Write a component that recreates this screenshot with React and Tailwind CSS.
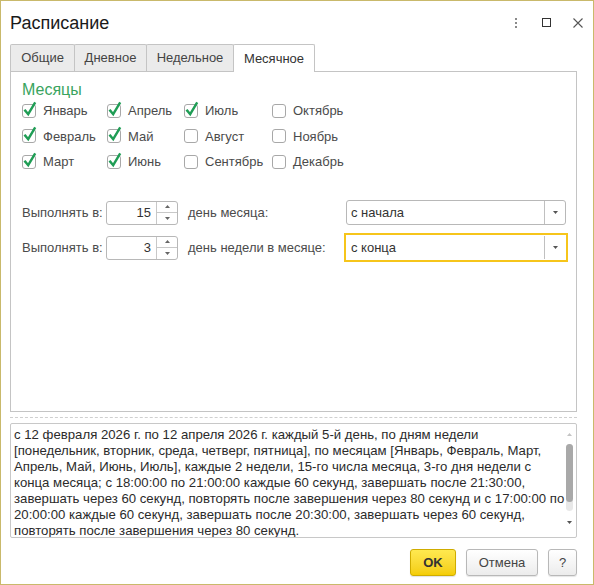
import React from "react";

const MONTHS = [
  [
    { name: "Январь", on: true },
    { name: "Апрель", on: true },
    { name: "Июль", on: true },
    { name: "Октябрь", on: false },
  ],
  [
    { name: "Февраль", on: true },
    { name: "Май", on: true },
    { name: "Август", on: false },
    { name: "Ноябрь", on: false },
  ],
  [
    { name: "Март", on: true },
    { name: "Июнь", on: true },
    { name: "Сентябрь", on: false },
    { name: "Декабрь", on: false },
  ],
];

const COL_WIDTHS = ["w-[85px]", "w-[77px]", "w-[88px]", "w-[90px]"];

const TABS = [
  { name: "Общие", w: "w-[65px]" },
  { name: "Дневное", w: "w-[73px]" },
  { name: "Недельное", w: "w-[88px]" },
  { name: "Месячное", w: "w-[82px]", active: true },
];

// description lines, broken as in the form
const DESCRIPTION = [
  "с 12 февраля 2026 г. по 12 апреля 2026 г. каждый 5-й день, по дням недели",
  "[понедельник, вторник, среда, четверг, пятница], по месяцам [Январь, Февраль, Март,",
  "Апрель, Май, Июнь, Июль], каждые 2 недели, 15-го числа месяца, 3-го дня недели с",
  "конца месяца; с 18:00:00 по 21:00:00 каждые 60 секунд, завершать после 21:30:00,",
  "завершать через 60 секунд, повторять после завершения через 80 секунд и с 17:00:00 по",
  "20:00:00 каждые 60 секунд, завершать после 20:30:00, завершать через 60 секунд,",
  "повторять после завершения через 80 секунд.",
];

const Checkbox = ({ checked }) => (
  <svg width="14" height="14" viewBox="0 0 14 14" className="overflow-visible flex-shrink-0">
    <rect x="0.5" y="0.5" width="13" height="13" rx="2.5" fill="#fff" stroke="#a8a8a8" />
    {checked && (
      <path
        d="M3.2 6.6 L6.2 10.2 L12.6 -0.6"
        fill="none"
        stroke="#1f9d55"
        strokeWidth="2.4"
        strokeLinecap="square"
      />
    )}
  </svg>
);

const Arrow = ({ up, color = "#555" }) => (
  <svg width="5" height="3" viewBox="0 0 5 3">
    <path d={up ? "M0 3 L2.5 0 L5 3 Z" : "M0 0 L5 0 L2.5 3 Z"} fill={color} />
  </svg>
);

const SpinInput = ({ value }) => (
  <div className="w-[72px] h-[24px] flex border border-[#b8b8b8] rounded-[3px] bg-white">
    <div className="flex-1 flex items-center justify-end pr-[5px] text-[#333]">{value}</div>
    <div className="w-[21px] flex flex-col border-l border-[#c8c8c8]">
      <div className="flex-1 flex items-center justify-center border-b border-[#c8c8c8]">
        <Arrow up color="#666" />
      </div>
      <div className="flex-1 flex items-center justify-center">
        <Arrow color="#666" />
      </div>
    </div>
  </div>
);

const Select = ({ value, focused }) => (
  <div
    className={
      focused
        ? "w-[224px] h-[29px] -ml-[1px] flex border-2 border-[#f6c51b] bg-white p-[1px]"
        : "w-[220px] h-[25px] ml-[1px] flex border border-[#b8b8b8] rounded-[3px] bg-white"
    }
  >
    <div className="flex-1 flex items-center pl-[4px] text-[#333]">{value}</div>
    <div className="w-[21px] flex items-center justify-center border-l border-[#c0c0c0]">
      <Arrow color="#555" />
    </div>
  </div>
);

export default function App() {
  return (
    <div className="w-[594px] h-[585px] border border-[#c9b96b] bg-white flex flex-col font-['Liberation_Sans',Arial,sans-serif] text-[13px] text-[#4b4b4b] overflow-hidden">
      {/* Title bar */}
      <div className="h-[43px] flex items-center pl-[9px] flex-shrink-0">
        <h1 className="text-[18px] text-[#1a1a1a] leading-[20px] pt-[1px]">Расписание</h1>
        <div className="ml-auto flex items-center">
          <div className="w-[31px] h-[20px] flex flex-col items-center justify-center gap-[2px]">
            <span className="w-[2px] h-[2px] bg-[#8a8a8a]" />
            <span className="w-[2px] h-[2px] bg-[#8a8a8a]" />
            <span className="w-[2px] h-[2px] bg-[#8a8a8a]" />
          </div>
          <div className="w-[31px] h-[20px] flex items-center justify-center">
            <span className="w-[9px] h-[9px] border border-[#333]" />
          </div>
          <div className="w-[31px] h-[20px] flex items-center justify-center">
            <svg width="10" height="10" viewBox="0 0 10 10">
              <path d="M0.5 0.5 L9.5 9.5 M9.5 0.5 L0.5 9.5" stroke="#555" strokeWidth="1.1" />
            </svg>
          </div>
        </div>
      </div>

      <div className="flex flex-col pl-[9px] pr-[16px] flex-1">
        {/* Tabs */}
        <div className="h-[27px] flex relative z-10 flex-shrink-0">
          {TABS.map((t, i) => (
            <div
              key={t.name}
              className={`${t.w} ${i > 0 ? "-ml-px" : ""} flex items-center justify-center border-t border-l border-r border-[#c4c4c4] rounded-t-[2px] ${
                t.active ? "h-[28px] bg-white text-[#333]" : "h-[27px] bg-[#ebebeb] text-[#444]"
              }`}
            >
              {t.name}
            </div>
          ))}
        </div>

        {/* Tab panel */}
        <div className="h-[341px] border border-[#c4c4c4] pl-[11px] pt-[8px] flex flex-col flex-shrink-0">
          <div className="text-[16px] leading-[19px] text-[#39a45e]">Месяцы</div>
          <div className="flex flex-col -mt-[1px]">
            {MONTHS.map((row, r) => (
              <div key={r} className="h-[25.5px] flex items-center">
                {row.map((m, c) => (
                  <div key={m.name} className={`${COL_WIDTHS[c]} flex items-center gap-[7px]`}>
                    <Checkbox checked={m.on} />
                    <span>{m.name}</span>
                  </div>
                ))}
              </div>
            ))}
          </div>

          <div className="flex flex-col gap-[5px] mt-[23px]">
            <div className="h-[30px] flex items-center">
              <span className="w-[84px]">Выполнять в:</span>
              <SpinInput value="15" />
              <span className="ml-[10px] w-[157px]">день месяца:</span>
              <Select value="с начала" />
            </div>
            <div className="h-[30px] flex items-center">
              <span className="w-[84px]">Выполнять в:</span>
              <SpinInput value="3" />
              <span className="ml-[10px] w-[157px]">день недели в месяце:</span>
              <Select value="с конца" focused />
            </div>
          </div>
        </div>

        {/* Separator */}
        <div className="mt-[5px] border-t border-dashed border-[#cfcfcf] flex-shrink-0" />

        {/* Description */}
        <div className="mt-[5px] h-[115px] border border-[#c8c8c8] rounded-[2px] flex relative overflow-hidden flex-shrink-0">
          <div className="flex-1 pl-[3px] pt-[3px] pr-[13px] text-[13.2px] text-[#2b2b2b] leading-[16px]">
            {DESCRIPTION.map((line, i) => (
              <div key={i} className="whitespace-nowrap">
                {line}
              </div>
            ))}
          </div>
          <div className="absolute right-[2px] top-0 bottom-0 w-[9px] flex flex-col items-center bg-white">
            <div className="mt-[9px]">
              <Arrow up color="#c4c4c4" />
            </div>
            <div className="mt-[8px] w-[7px] h-[67px] rounded-full bg-[#e8e8e8] flex flex-col">
              <div className="h-[58px] rounded-full bg-[#a9a9a9]" />
            </div>
            <div className="mt-[10px]">
              <Arrow color="#555" />
            </div>
          </div>
        </div>

        {/* Buttons */}
        <div className="mt-[11px] flex justify-end gap-[10px] flex-shrink-0">
          <button className="w-[46px] h-[27px] rounded-[3px] border border-[#cfac00] bg-gradient-to-b from-[#ffe94f] to-[#f4cd00] font-bold text-[#333] shadow-[0_1px_1px_rgba(0,0,0,0.12)]">
            OK
          </button>
          <button className="w-[72px] h-[27px] rounded-[3px] border border-[#b8b8b8] bg-gradient-to-b from-[#ffffff] to-[#ececec] text-[#444] shadow-[0_1px_1px_rgba(0,0,0,0.1)]">
            Отмена
          </button>
          <button className="w-[29px] h-[27px] rounded-[3px] border border-[#b8b8b8] bg-gradient-to-b from-[#ffffff] to-[#ececec] text-[#444] shadow-[0_1px_1px_rgba(0,0,0,0.1)]">
            ?
          </button>
        </div>
      </div>
    </div>
  );
}
